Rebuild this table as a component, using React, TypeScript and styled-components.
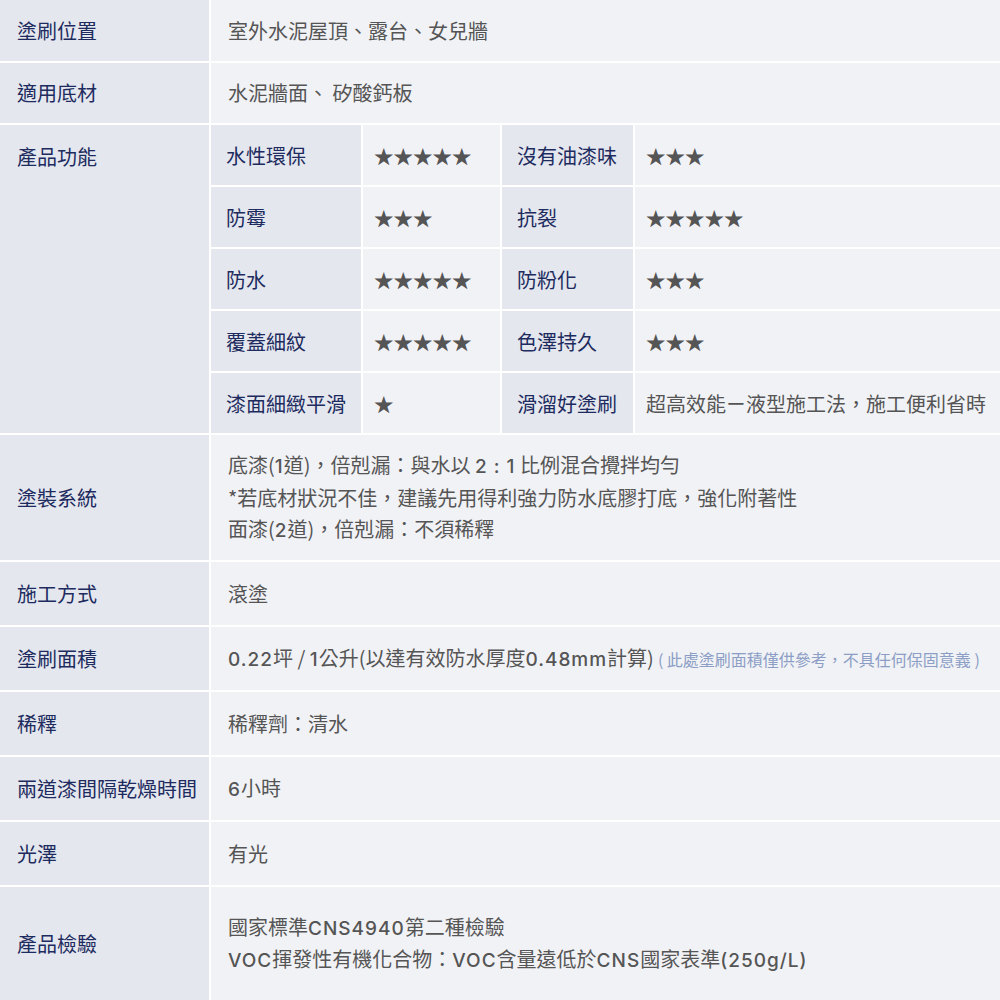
import styled, { createGlobalStyle } from 'styled-components'

const GlobalStyle = createGlobalStyle`
  body {
    margin: 0;
    background: #fff;
    font-family: "Noto Sans CJK TC", "Noto Sans", sans-serif;
  }
`

const Table = styled.div`
  width: 1000px;
  display: flex;
  flex-direction: column;
  gap: 2px;
  background: #fff;
`

const Row = styled.div<{ $h: number }>`
  display: grid;
  grid-template-columns: 209px 1fr;
  column-gap: 2px;
  min-height: ${p => p.$h}px;
`

const Label = styled.div<{ $top?: boolean }>`
  background: #e4e7ee;
  color: #1d2b5e;
  font-size: 20px;
  line-height: 30px;
  padding: ${p => (p.$top ? '17px 0 0 17px' : '0 0 0 17px')};
  display: flex;
  align-items: ${p => (p.$top ? 'flex-start' : 'center')};
  white-space: nowrap;
`

const Value = styled.div<{ $lh?: number }>`
  background: #f1f2f5;
  color: #555;
  font-size: 20px;
  line-height: ${p => p.$lh ?? 30}px;
  padding-left: 17px;
  display: flex;
  flex-direction: column;
  justify-content: center;
  white-space: nowrap;
`

const Num = styled.span`
  font-family: "Inter", "Noto Sans CJK TC", sans-serif;
  font-weight: 500;
  font-size: 19px;
  letter-spacing: 1px;
`

const Note = styled.span`
  color: #8c9ec6;
  font-size: 16px;
  margin-left: 4px;
`

const FeatureGrid = styled.div`
  display: grid;
  grid-template-columns: 150px 137px 131px 1fr;
  grid-auto-rows: 60px;
  gap: 2px;
`

const FeatureName = styled.div`
  background: #e4e7ee;
  color: #1d2b5e;
  font-size: 20px;
  padding-left: 15px;
  display: flex;
  align-items: center;
  white-space: nowrap;
`

const FeatureValue = styled.div`
  background: #f1f2f5;
  color: #555;
  font-size: 20px;
  padding-left: 11px;
  display: flex;
  align-items: center;
  white-space: nowrap;
`

const Stars = styled.span`
  color: #555;
  font-size: 19.5px;
`

const features: [string, string, string, string][] = [
  ['水性環保', '★★★★★', '沒有油漆味', '★★★'],
  ['防霉', '★★★', '抗裂', '★★★★★'],
  ['防水', '★★★★★', '防粉化', '★★★'],
  ['覆蓋細紋', '★★★★★', '色澤持久', '★★★'],
  ['漆面細緻平滑', '★', '滑溜好塗刷', '超高效能ㄧ液型施工法，施工便利省時'],
]

const renderValue = (v: string) =>
  v.startsWith('★') ? <Stars>{v}</Stars> : v

export default function App() {
  return (
    <>
      <GlobalStyle />
      <Table>
        <Row $h={61}>
          <Label>塗刷位置</Label>
          <Value>室外水泥屋頂、露台、女兒牆</Value>
        </Row>
        <Row $h={60}>
          <Label>適用底材</Label>
          <Value>水泥牆面、 矽酸鈣板</Value>
        </Row>
        <Row $h={308}>
          <Label $top>產品功能</Label>
          <FeatureGrid>
            {features.map(([a, b, c, d]) => (
              <>
                <FeatureName key={a}>{a}</FeatureName>
                <FeatureValue>{renderValue(b)}</FeatureValue>
                <FeatureName>{c}</FeatureName>
                <FeatureValue>{renderValue(d)}</FeatureValue>
              </>
            ))}
          </FeatureGrid>
        </Row>
        <Row $h={125}>
          <Label>塗裝系統</Label>
          <Value $lh={31}>
            <div>底漆(<Num>1</Num>道)，倍剋漏：與水以 <Num>2 : 1</Num> 比例混合攪拌均勻</div>
            <div>*若底材狀況不佳，建議先用得利強力防水底膠打底，強化附著性</div>
            <div>面漆(<Num>2</Num>道)，倍剋漏：不須稀釋</div>
          </Value>
        </Row>
        <Row $h={63}>
          <Label>施工方式</Label>
          <Value>滾塗</Value>
        </Row>
        <Row $h={63}>
          <Label>塗刷面積</Label>
          <Value>
            <div>
              <Num>0.22</Num>坪 / <Num>1</Num>公升(以達有效防水厚度<Num>0.48mm</Num>計算)
              <Note>( 此處塗刷面積僅供參考，不具任何保固意義 )</Note>
            </div>
          </Value>
        </Row>
        <Row $h={63}>
          <Label>稀釋</Label>
          <Value>稀釋劑：清水</Value>
        </Row>
        <Row $h={63}>
          <Label>兩道漆間隔乾燥時間</Label>
          <Value>
            <div><Num>6</Num>小時</div>
          </Value>
        </Row>
        <Row $h={63}>
          <Label>光澤</Label>
          <Value>有光</Value>
        </Row>
        <Row $h={113}>
          <Label>產品檢驗</Label>
          <Value $lh={30}>
            <div>國家標準<Num>CNS4940</Num>第二種檢驗</div>
            <div><Num>VOC</Num>揮發性有機化合物：<Num>VOC</Num>含量遠低於<Num>CNS</Num>國家表準<Num>(250g/L)</Num></div>
          </Value>
        </Row>
      </Table>
    </>
  )
}
